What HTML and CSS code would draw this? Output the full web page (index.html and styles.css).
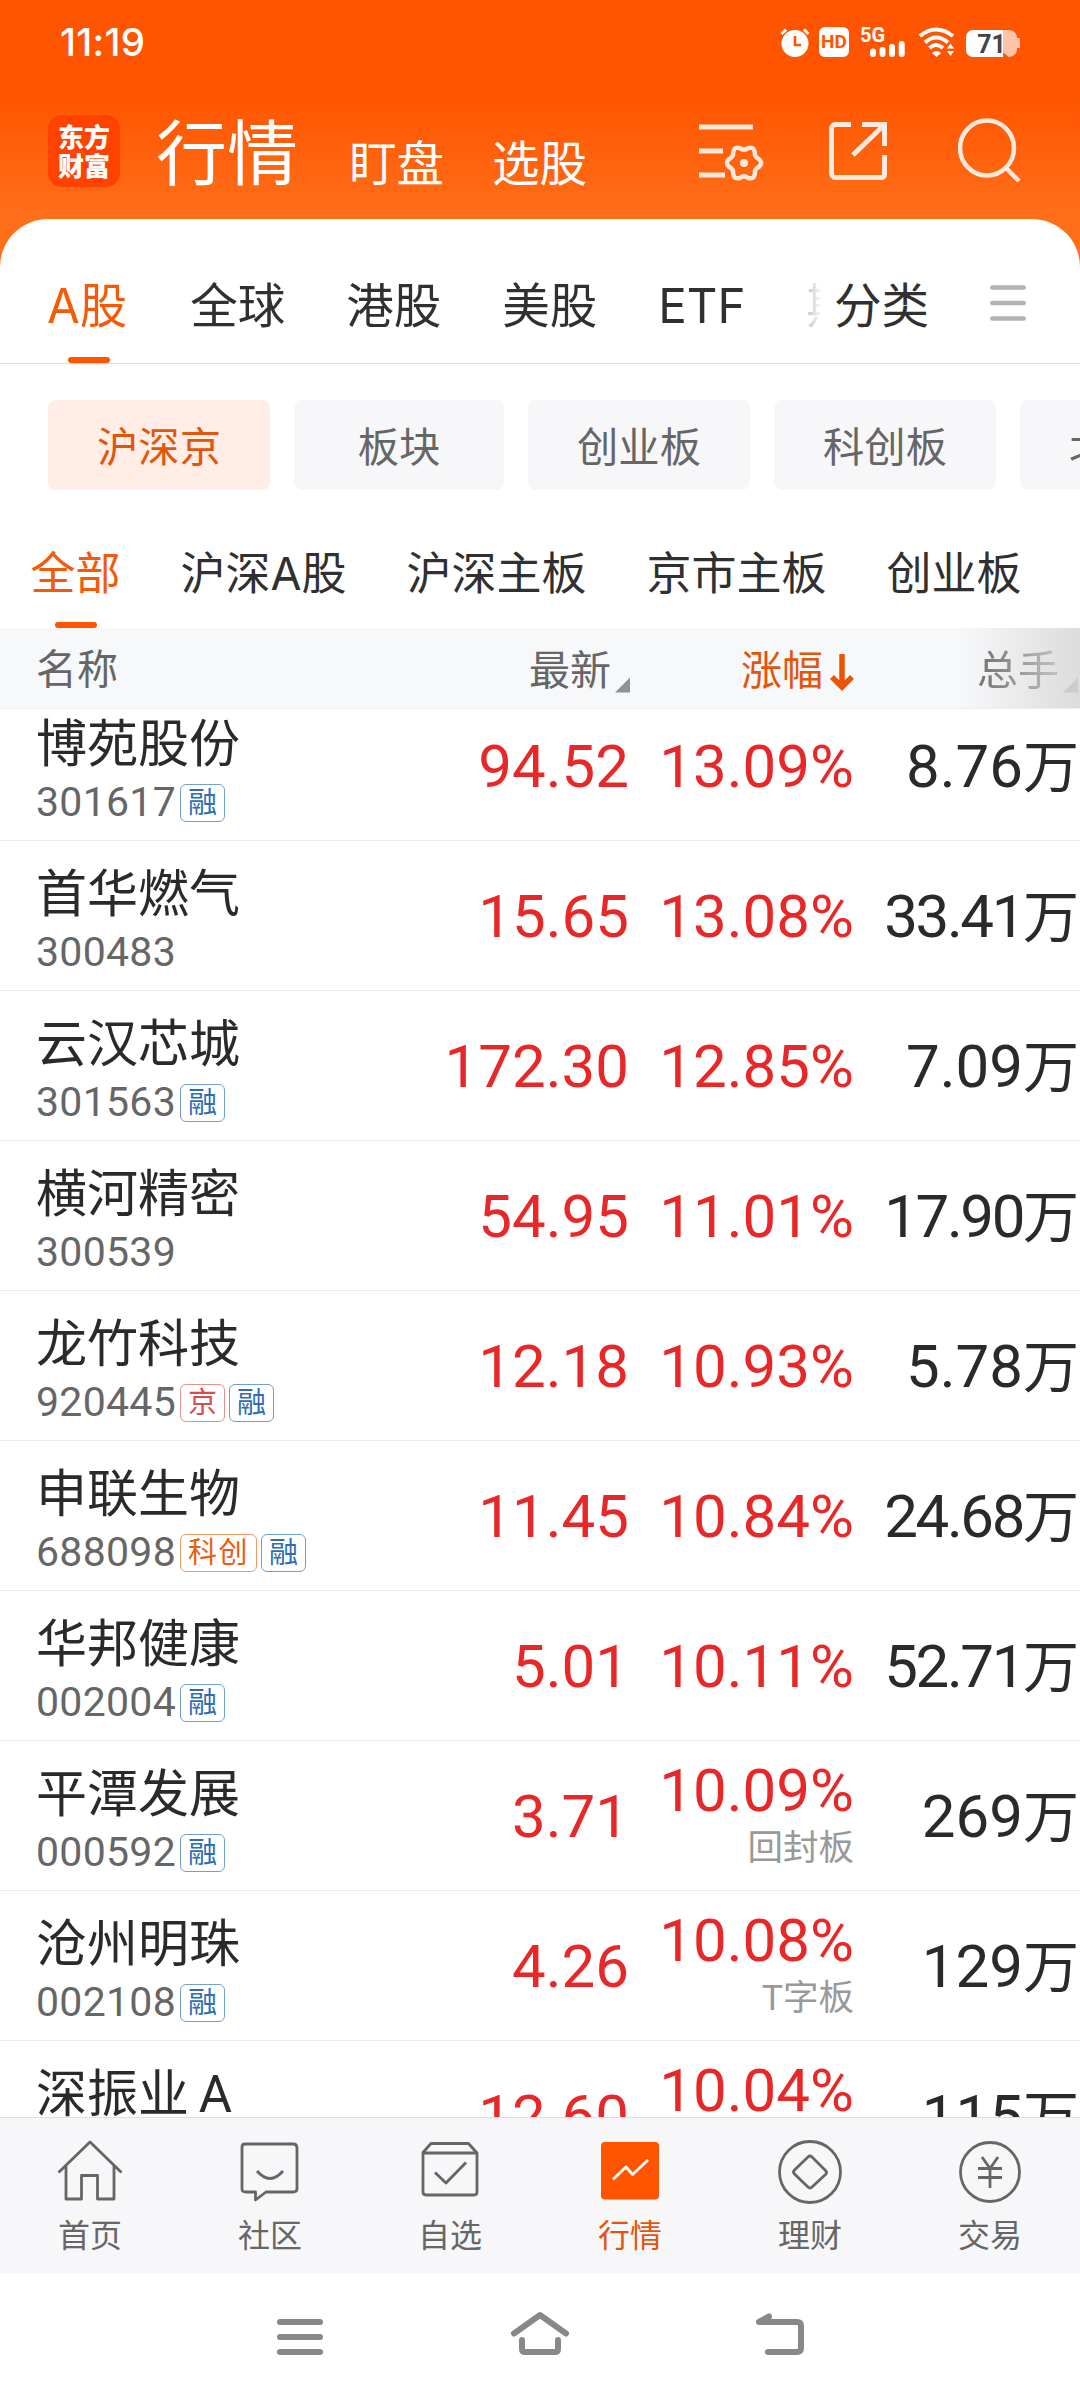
FILE: index.html
```html
<!DOCTYPE html>
<html lang="zh-CN">
	<head>
		<meta charset="utf-8">
		<title>行情</title>
		<link rel="stylesheet" href="styles.css">
	</head>

	<body>
		<header class="top">
			<div class="status">
				<span class="clock">11:19</span>
				<svg class="alarm" width="30" height="30" viewBox="0 0 30 30">
					<circle cx="15" cy="16.5" r="13.5" fill="#fff"/>
					<path d="M1.5 7L6 2.500M28.500 7L24 2.500" stroke="#fff" stroke-width="3"/>
					<path d="M15 9v9h6" fill="none" stroke="#ff5500" stroke-width="2.600"/>
				</svg>
				<span class="hd">HD</span>
				<svg class="signal" width="46" height="30" viewBox="0 0 46 30">
					<text x="0" y="14.500" class="fiveg">5G</text>
					<path d="M13 24.500v2.500M22.500 23v4M32 20v7M41.700 17v10" stroke="#fff" stroke-width="6" stroke-linecap="round"/>
				</svg>
				<svg class="wifi" width="38" height="30" viewBox="0 0 38 30">
					<path d="M2 9Q18 -4 35 9M7 15.500Q18 5.500 30 15.500M11.500 21Q18 15 25 21" fill="none" stroke="#fff" stroke-width="4"/>
					<path d="M14 26l4.500 4 4.500-4q-4.500-4-9 0zM29 21.500l3.500-5 3.500 5zM29 24h7l-3.500 5z" fill="#fff"/>
				</svg>
				<svg class="battery" width="55" height="30" viewBox="0 0 55 30">
					<path d="M8 3h35a8 8 0 0 1 8 8h3v10h-3a8 8 0 0 1-8 9z" fill="#ffc4a8"/>
					<path d="M37 3H7a7 7 0 0 0-7 7v13a7 7 0 0 0 7 7h30z" fill="#fff"/>
					<text x="25.500" y="25.500" class="level">71</text>
				</svg>
			</div>
			<div class="titlebar">
				<div class="logo">东方<br>财富</div>
				<span class="title">行情</span>
				<span class="link">盯盘</span>
				<span class="link">选股</span>
				<svg class="tool tool-list" width="63" height="64" viewBox="0 0 63 64" fill="none" stroke="#ffe8dc" stroke-width="5">
					<path d="M0 9h54M0 33h24M0 57h26"/>
					<path stroke-width="4.500" d="M59.800 41Q64.500 45 59.800 49Q55.400 51 55.800 55.800Q54.800 61.900 49 59.800Q45 57 41 59.800Q35.200 61.900 34.200 55.800Q34.600 51 30.200 49Q25.500 45 30.200 41Q34.600 39 34.200 34.200Q35.200 28.100 41 30.200Q45 33 49 30.200Q54.800 28.100 55.800 34.200Q55.400 39 59.800 41z"/>
					<circle cx="45" cy="45" r="4" fill="#ffe8dc" stroke="none"/>
				</svg>
				<svg class="tool tool-share" width="60" height="64" viewBox="0 0 60 64" fill="none" stroke="#ffe8dc" stroke-width="5">
					<path d="M22 6.500H6.500a4 4 0 0 0-4 4v45a4 4 0 0 0 4 4h46a3 3 0 0 0 3-3V37M33 6.500h22.500V28M24 37L55 7"/>
				</svg>
				<svg class="tool" width="64" height="64" viewBox="0 0 64 64" fill="none" stroke="#ffe8dc" stroke-width="4.500">
					<ellipse cx="29" cy="30" rx="27" ry="27.500"/>
					<path d="M47.500 49.500L61 63"/>
				</svg>
			</div>
		</header>

		<main class="sheet">
			<nav class="markets">
				<div class="scroll">
					<span class="market on">A股</span>
					<span class="market">全球</span>
					<span class="market">港股</span>
					<span class="market">美股</span>
					<span class="market">ETF</span>
					<span class="market">期</span>
				</div>
				<span class="sort">分类</span>
				<svg class="more" width="36" height="38" viewBox="0 0 36 38" stroke="#b2b2b2" stroke-width="4.500" stroke-linecap="round">
					<path d="M2.300 3.500h31.400M2.300 19h31.400M2.300 34.500h31.400"/>
				</svg>
			</nav>

			<div class="chips">
				<span class="chip on">沪深京</span>
				<span class="chip">板块</span>
				<span class="chip">创业板</span>
				<span class="chip">科创板</span>
				<span class="chip">北交所</span>
			</div>

			<nav class="boards">
				<span class="board on">全部</span>
				<span class="board">沪深A股</span>
				<span class="board">沪深主板</span>
				<span class="board">京市主板</span>
				<span class="board">创业板</span>
			</nav>

			<div class="cols head">
				<span class="h-name">名称</span>
				<span class="h-price">最新<i class="tri"></i></span>
				<span class="h-change">涨幅<svg width="24" height="38" viewBox="0 0 24 38" fill="none" stroke="#e95504" stroke-width="5.500"><path d="M12 0v32M2 23L12 33l10-10"/></svg></span>
				<span class="h-volume">总手<i class="tri"></i></span>
			</div>

			<div class="list">
				<div class="cols row">
					<div class="stock"><b>博苑股份</b><p>301617<i class="tag">融</i></p></div>
					<div class="price">94.52</div>
					<div class="change">13.09%</div>
					<div class="volume">8.76<em>万</em></div>
				</div>
				<div class="cols row">
					<div class="stock"><b>首华燃气</b><p>300483</p></div>
					<div class="price">15.65</div>
					<div class="change">13.08%</div>
					<div class="volume long">33.41<em>万</em></div>
				</div>
				<div class="cols row">
					<div class="stock"><b>云汉芯城</b><p>301563<i class="tag">融</i></p></div>
					<div class="price">172.30</div>
					<div class="change">12.85%</div>
					<div class="volume">7.09<em>万</em></div>
				</div>
				<div class="cols row">
					<div class="stock"><b>横河精密</b><p>300539</p></div>
					<div class="price">54.95</div>
					<div class="change">11.01%</div>
					<div class="volume long">17.90<em>万</em></div>
				</div>
				<div class="cols row">
					<div class="stock"><b>龙竹科技</b><p>920445<i class="tag red">京</i><i class="tag">融</i></p></div>
					<div class="price">12.18</div>
					<div class="change">10.93%</div>
					<div class="volume">5.78<em>万</em></div>
				</div>
				<div class="cols row">
					<div class="stock"><b>申联生物</b><p>688098<i class="tag orange">科创</i><i class="tag">融</i></p></div>
					<div class="price">11.45</div>
					<div class="change">10.84%</div>
					<div class="volume long">24.68<em>万</em></div>
				</div>
				<div class="cols row">
					<div class="stock"><b>华邦健康</b><p>002004<i class="tag">融</i></p></div>
					<div class="price">5.01</div>
					<div class="change">10.11%</div>
					<div class="volume long">52.71<em>万</em></div>
				</div>
				<div class="cols row">
					<div class="stock"><b>平潭发展</b><p>000592<i class="tag">融</i></p></div>
					<div class="price">3.71</div>
					<div class="change">10.09%<small>回封板</small></div>
					<div class="volume">269<em>万</em></div>
				</div>
				<div class="cols row">
					<div class="stock"><b>沧州明珠</b><p>002108<i class="tag">融</i></p></div>
					<div class="price">4.26</div>
					<div class="change">10.08%<small>T字板</small></div>
					<div class="volume">129<em>万</em></div>
				</div>
				<div class="cols row">
					<div class="stock"><b>深振业 A</b></div>
					<div class="price">12.60</div>
					<div class="change">10.04%<small></small></div>
					<div class="volume">115<em>万</em></div>
				</div>
			</div>
		</main>

		<nav class="tabs">
			<div class="tab">
				<svg width="66" height="66" viewBox="0 0 66 66"><path d="M1.500 34.500L33 4l31.500 30.500M9 28v33h15.500V37.500h16V61H57V28"/></svg>
				首页
			</div>
			<div class="tab">
				<svg width="66" height="66" viewBox="0 0 66 66"><path d="M8 6h48q4 0 4 4v41q0 3-4 3H29l-10.500 8V54H9q-4 0-4-3V9q0-3 3-3zM20 33q13 15 26 0"/></svg>
				社区
			</div>
			<div class="tab">
				<svg width="66" height="66" viewBox="0 0 66 66"><path d="M14 5.500h37.500L60 15v39q0 3-3 3H9q-3 0-3-3V14.500zM6 15h54M18 34.500l11 10.500 20-20.500"/></svg>
				自选
			</div>
			<div class="tab on">
				<svg width="66" height="66" viewBox="0 0 66 66"><rect x="4" y="4" width="58" height="57.500" rx="4"/><path d="M16 41.500L29 29l6.500 7.500L51 22"/></svg>
				行情
			</div>
			<div class="tab">
				<svg width="66" height="66" viewBox="0 0 66 66"><circle cx="33" cy="34" r="30.500"/><path d="M31 19q2-2 4 0l13.500 13.500q2 2 0 4L35 49q-2 2-4 0L17.500 36q-2-2 0-4z"/></svg>
				理财
			</div>
			<div class="tab">
				<svg width="66" height="66" viewBox="0 0 66 66"><circle cx="33" cy="34" r="29.500"/><path d="M25 19l8 11.500L41 19M33 30v20M21 30.500h24M21 39.500h24"/></svg>
				交易
			</div>
		</nav>

		<footer class="keys">
			<svg width="60" height="50" viewBox="0 0 60 50"><path d="M10 11h40M10 26h40M10 41h40"/></svg>
			<svg width="60" height="50" viewBox="0 0 60 50"><path d="M4 22.500L30 4l26 18.500M12 29v9q0 3 3 3h30q3 0 3-3v-9"/></svg>
			<svg width="60" height="50" viewBox="0 0 60 50"><path d="M19 5.500L9 11h38q4 0 4 4v22q0 4-4 4H18"/></svg>
		</footer>
	</body>
</html>
```
FILE: styles.css
```css
html, body {
	margin: 0px;
	padding: 0px;
}

body {
	width: 1080px;
	height: 2400px;
	overflow: hidden;
	display: flex;
	flex-direction: column;
	background: #ff6f1a;
	color: #303030;
	font-family: Roboto, "Noto Sans CJK SC", sans-serif;
}

i, em, b, small {
	font-style: normal;
	font-weight: normal;
}

p {
	margin: 0px;
}

.top {
	height: 219px;
	flex: none;
	background: linear-gradient(to bottom, #ff5500 0px, #ff5500 95px, #ff6f1a 219px);
	color: white;
}

/* status bar */
.status {
	display: flex;
	align-items: center;
	height: 84px;
	padding: 0px 59px 0px 60px;
}

.clock {
	font: 500 38.5px/84px Inter, sans-serif;
	letter-spacing: 0.3px;
	flex: 1;
}

.hd {
	width: 30px;
	height: 30px;
	margin-left: 9px;
	border-radius: 6px;
	background: white;
	color: #ff5500;
	font: bold 19px/30px Roboto, sans-serif;
	text-align: center;
}

.signal {
	margin-left: 11px;
	overflow: visible;
}

.wifi {
	margin-left: 12px;
}

.battery {
	margin-left: 10px;
}

.fiveg {
	font: bold 20px Roboto, sans-serif;
	fill: white;
}

.level {
	font: bold 25px Roboto, sans-serif;
	fill: #444;
	text-anchor: middle;
}

/* app title */
.titlebar {
	display: flex;
	align-items: flex-end;
	height: 103px;
	padding: 0px 58px 0px 48px;
}

.logo {
	box-sizing: border-box;
	width: 72px;
	height: 72px;
	padding-top: 6px;
	border-radius: 14px;
	background: #ff4200;
	font: 900 26px/29px "Noto Sans CJK SC", sans-serif;
	text-align: center;
}

.title {
	margin: 0px 0px -5px 36px;
	font-size: 71px;
	line-height: 74px;
}

.link {
	margin: 0px 0px -4px 48px;
	font-size: 47.5px;
	line-height: 51px;
}

.title + .link {
	margin-left: 51px;
}

.tool {
	margin-bottom: 5px;
}

.tool-list {
	margin-left: auto;
	overflow: visible;
}

.tool-share {
	margin: 0px 69px 5px 67px;
}

/* white sheet */
.sheet {
	height: 1898px;
	flex: none;
	overflow: hidden;
	border-radius: 48px 48px 0px 0px;
	background: white;
}

.markets {
	display: flex;
	height: 144px;
	border-bottom: 1px solid #dcdcdc;
	font-family: Inter, "Noto Sans CJK SC", sans-serif;
	font-size: 47.5px;
	line-height: 173px;
}

.scroll {
	display: flex;
	gap: 61px;
	width: 774px;
	padding-left: 47px;
	overflow: hidden;
	white-space: nowrap;
	-webkit-mask-image: linear-gradient(to right, #000 770px, transparent 822px);
}

.market, .board {
	display: flex;
	flex-direction: column;
	flex: none;
}

.market:first-child {
	margin-right: 2px;
}

.on {
	color: #f55a08;
}

.market.on::after, .board.on::after {
	content: "";
	align-self: center;
	width: 42px;
	height: 6px;
	border-radius: 3px;
	background: #ff5500;
}

.market.on::after {
	margin: -35px 0px 0px 3px;
}

.sort {
	margin-left: 13px;
}

.more {
	margin: 65px 0px 0px 61px;
}

.chips {
	display: flex;
	gap: 24px;
	padding: 36px 0px 0px 48px;
}

.chip {
	box-sizing: border-box;
	flex: none;
	min-width: 210px;
	height: 90px;
	padding: 0px 49px;
	border-radius: 8px;
	background: #f7f7fa;
	color: #666;
	font-size: 41.333px;
	line-height: 96px;
	text-align: center;
}

.chip.on {
	background: #ffede6;
	color: #e2560c;
}

.boards {
	display: flex;
	gap: 60px;
	height: 138px;
	padding-left: 30.5px;
	font-family: Inter, "Noto Sans CJK SC", sans-serif;
	font-size: 45px;
	line-height: 168px;
}

.board.on::after {
	margin-top: -36px;
}

/* quote table */
.cols {
	display: grid;
	grid-template-columns: 400px 230px 224px 226px;
}

.head {
	height: 80px;
	border-bottom: 1px solid #eeeff0;
	background: linear-gradient(to right, transparent 960px, #dcdcdc 1080px), #f7f8fa;
	color: #666;
	font-size: 41px;
	line-height: 84px;
}

.head span {
	display: flex;
	justify-content: flex-end;
	align-items: center;
}

.head .h-name {
	justify-content: flex-start;
	padding: 0px 0px 2px 36px;
}

.head .h-change {
	color: #e2560c;
}

.h-change svg {
	margin: 4px 0px 0px 7px;
}

.head .h-volume {
	padding-right: 2px;
	color: transparent;
	background: linear-gradient(to right, #777 130px, #ccc 215px);
	-webkit-background-clip: text;
}

.tri {
	width: 15px;
	height: 15px;
	margin: 28px 0px 0px 4px;
	background: #909296;
	clip-path: polygon(100% 0, 100% 100%, 0 100%);
}

.h-volume .tri {
	background: #ccc;
}

.list {
	display: flex;
	flex-direction: column;
	height: 1408px;
	overflow: hidden;
}

.row {
	flex: none;
	height: 149px;
	border-bottom: 1px solid #ebebeb;
	color: #2a2a2a;
	font-size: 60px;
	line-height: 152px;
	text-align: right;
}

/* first row is scrolled partly under the header */
.row:first-child {
	margin-top: -18px;
}

.stock {
	padding: 23px 0px 0px 36px;
	text-align: left;
}

.stock b {
	display: block;
	font-size: 51px;
	line-height: 62px;
	word-spacing: -3px;
}

.stock p {
	display: flex;
	align-items: center;
	height: 52px;
	color: #666;
	font-size: 41px;
	letter-spacing: 0.3px;
	line-height: 52px;
}

.tag {
	margin: 1px 0px 0px 4px;
	padding: 0px 7px;
	border: 1px solid #6f9fd0;
	border-radius: 6px;
	color: #2e6db4;
	font-size: 29px;
	letter-spacing: 0px;
	line-height: 36px;
}

.tag.red {
	border-color: #e88f8f;
	color: #d84c4c;
}

.tag.orange {
	border-color: #f09a62;
	color: #e95e14;
	letter-spacing: 1.5px;
}

.price, .change {
	color: #e82828;
}

.price {
	padding-right: 1px;
}

.change small {
	display: block;
	color: #999;
	font-size: 35.5px;
	line-height: 44px;
}

.change:has(small) {
	padding-top: 15px;
	line-height: 70px;
}

.volume {
	padding-right: 1px;
}

.volume.long {
	letter-spacing: -2.4px;
}

.volume em {
	font-size: 56px;
	letter-spacing: 0px;
}

/* bottom tabs */
.tabs {
	display: flex;
	height: 156px;
	flex: none;
	border-top: 1px solid #dfdfe2;
	background: #f7f7fa;
}

.tab {
	display: flex;
	flex-direction: column;
	align-items: center;
	width: 180px;
	padding-top: 20px;
	color: #666;
	font-size: 32px;
	line-height: 64px;
}

.tab svg {
	fill: none;
	stroke: #666;
	stroke-width: 2.8;
	stroke-linejoin: round;
}

.tab.on {
	color: #e2560c;
}

.tab.on svg {
	stroke: white;
}

.tab rect {
	fill: #ff5500;
	stroke: none;
}

/* android keys */
.keys {
	display: flex;
	flex: 1;
	gap: 180px;
	padding: 37px 0px 0px 270px;
	background: white;
}

.keys svg {
	fill: none;
	stroke: #888;
	stroke-width: 6;
	stroke-linecap: round;
	stroke-linejoin: round;
}
```
